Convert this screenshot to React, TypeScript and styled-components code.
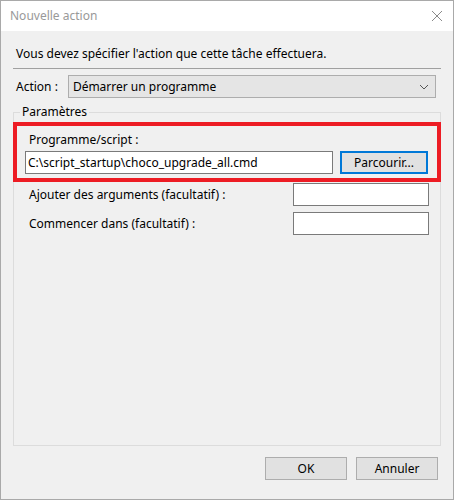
import styled, { createGlobalStyle } from "styled-components";

const GlobalStyle = createGlobalStyle`
  html, body {
    margin: 0;
    padding: 0;
    background: #f0f0f0;
  }
  * {
    box-sizing: border-box;
  }
`;

const Window = styled.div`
  width: 454px;
  height: 500px;
  border: 1px solid #a9a9a9;
  background: #f0f0f0;
  display: flex;
  flex-direction: column;
  font-family: "Noto Sans", "Liberation Sans", sans-serif;
  font-size: 12px;
  line-height: 16px;
  color: #000;
`;

const TitleBar = styled.div`
  height: 30px;
  background: #fff;
  display: flex;
  align-items: center;
  justify-content: space-between;
  padding: 0 10px 0 9px;
`;

const Title = styled.span`
  color: #999;
  font-size: 12px;
`;

const CloseIcon = () => (
  <svg width="12" height="12" viewBox="0 0 12 12">
    <path d="M1 1 L11 11 M11 1 L1 11" stroke="#8a8a8a" strokeWidth="1" fill="none" />
  </svg>
);

const Body = styled.div`
  flex: 1;
  display: flex;
  flex-direction: column;
  padding: 15px 12px 19px 12px;
`;

const Intro = styled.div`
  padding-left: 3px;
`;

const Separator = styled.div`
  height: 1px;
  background: #a0a0a0;
  margin-top: 6px;
`;

const ActionRow = styled.div`
  display: flex;
  align-items: center;
  margin-top: 6px;
  padding: 0 5px 0 3px;
  gap: 10px;
`;

const Combo = styled.div`
  flex: 1;
  height: 23px;
  background: #e5e5e5;
  border: 1px solid #adadad;
  display: flex;
  align-items: center;
  justify-content: space-between;
  padding: 0 6px 0 4px;
`;

const Chevron = () => (
  <svg width="10" height="6" viewBox="0 0 10 6">
    <polyline points="1,1 5,5 9,1" stroke="#555" strokeWidth="1" fill="none" />
  </svg>
);

const Group = styled.fieldset`
  flex: 1;
  margin: 6px 0 0 0;
  padding: 0;
  border: 1px solid #dcdcdc;
  min-width: 0;
`;

const Legend = styled.legend`
  margin-left: 6px;
  padding: 0 2px;
`;

const Highlight = styled.div`
  margin: 2px -1px 0 -1px;
  border: 4px solid #ed1c24;
  padding: 6px 9px 4px 8px;
`;

const HighlightLabel = styled.div`
  padding-left: 4px;
`;

const PathRow = styled.div`
  display: flex;
  align-items: flex-start;
  gap: 7px;
  margin-top: 3px;
`;

const TextBox = styled.div<{ $width?: number }>`
  height: 23px;
  background: #fff;
  border: 1px solid #7a7a7a;
  display: flex;
  align-items: center;
  padding: 0 2px;
  white-space: nowrap;
  overflow: hidden;
  ${(p) => (p.$width ? `width: ${p.$width}px;` : "flex: 1;")}
`;

const Button = styled.div<{ $focused?: boolean; $width: number }>`
  width: ${(p) => p.$width}px;
  height: 23px;
  background: #e1e1e1;
  border: ${(p) => (p.$focused ? "2px solid #0078d7" : "1px solid #adadad")};
  display: flex;
  align-items: center;
  justify-content: center;
`;

const FieldRows = styled.div`
  display: flex;
  flex-direction: column;
  gap: 6px;
  margin-top: 1px;
  padding: 0 11px 0 15px;
`;

const FieldRow = styled.div`
  display: flex;
  align-items: center;
  justify-content: space-between;
`;

const Footer = styled.div`
  display: flex;
  justify-content: flex-end;
  gap: 9px;
  margin-top: 11px;
  padding-right: 3px;
`;

export default function App() {
  return (
    <>
      <GlobalStyle />
      <Window>
        <TitleBar>
          <Title>Nouvelle action</Title>
          <CloseIcon />
        </TitleBar>
        <Body>
          <Intro>Vous devez spécifier l'action que cette tâche effectuera.</Intro>
          <Separator />
          <ActionRow>
            <span>Action :</span>
            <Combo>
              <span>Démarrer un programme</span>
              <Chevron />
            </Combo>
          </ActionRow>
          <Group>
            <Legend>Paramètres</Legend>
            <Highlight>
              <HighlightLabel>Programme/script :</HighlightLabel>
              <PathRow>
                <TextBox>C:\script_startup\choco_upgrade_all.cmd</TextBox>
                <Button $focused $width={88}>Parcourir...</Button>
              </PathRow>
            </Highlight>
            <FieldRows>
              <FieldRow>
                <span>Ajouter des arguments (facultatif) :</span>
                <TextBox $width={136} />
              </FieldRow>
              <FieldRow>
                <span>Commencer dans (facultatif) :</span>
                <TextBox $width={136} />
              </FieldRow>
            </FieldRows>
          </Group>
          <Footer>
            <Button $width={82}>OK</Button>
            <Button $width={82}>Annuler</Button>
          </Footer>
        </Body>
      </Window>
    </>
  );
}
